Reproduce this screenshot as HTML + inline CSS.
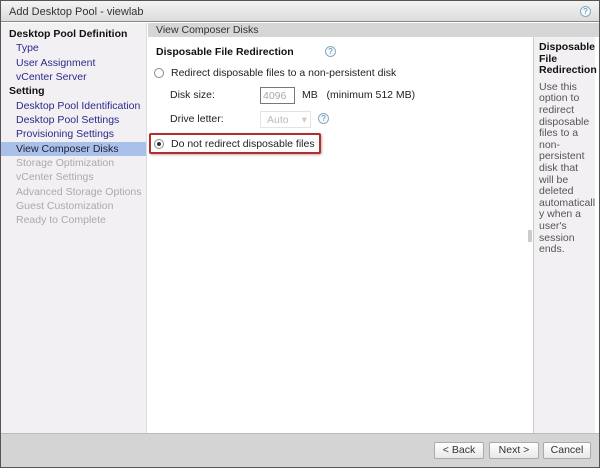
<!DOCTYPE html><html><head><style>
*{margin:0;padding:0;box-sizing:border-box}
body{width:600px;height:468px;overflow:hidden;font-family:"Liberation Sans",sans-serif;font-size:10.5px;color:#222;background:#fff;position:relative}
.frame{position:absolute;inset:0;border:1px solid #555;}
.title{position:absolute;left:1px;top:1px;right:1px;height:21px;background:linear-gradient(#f4f4f4,#dcdcdc);border-bottom:1px solid #888;padding:5px 8px;font-size:11px;color:#333}
.help{position:absolute;width:11px;height:11px;border-radius:50%;border:1px solid #8ab;font-size:8px;line-height:9px;text-align:center;color:#58a;background:#f4faff}
.side{position:absolute;left:1px;top:23px;width:146px;bottom:35px;background:#f3f0f4;border-right:1px solid #ddd}
.side div{height:14.35px;line-height:14.35px;padding-left:15px;color:#2a2a8a;white-space:nowrap}
.side .h{padding-left:8px;font-weight:bold;color:#111}
.side .sel{background:#a9c1ea;color:#223}
.side .dis{color:#aaa}
.hdr{position:absolute;left:148px;top:23px;right:1px;height:14px;background:#d6d6d6;padding:1px 8px;color:#333}
.right{position:absolute;left:533px;top:37px;width:62px;bottom:35px;background:#f3f0f4;border-left:1px solid #ccc;padding:5px 0 0 5px;font-size:10.5px;line-height:11.6px;color:#555}
.right b{color:#111;display:block;margin-bottom:5px}
.foot{position:absolute;left:1px;right:1px;top:433px;bottom:1px;background:#d4d4d4;border-top:1px solid #bbb}
.btn{position:absolute;top:442px;height:17px;border:1px solid #aaa;border-radius:2px;background:linear-gradient(#fff,#e8e8e8);text-align:center;line-height:15px;color:#333}
.radio{position:absolute;width:10px;height:10px;border-radius:50%;border:1px solid #888;background:#fff}
.t{position:absolute;white-space:nowrap}
</style></head><body>
<div class="frame"></div>
<div class="title">Add Desktop Pool - viewlab</div>
<div class="help" style="left:580px;top:6px">?</div>
<div class="side">
<div class="h" style="margin-top:4px">Desktop Pool Definition</div>
<div>Type</div><div>User Assignment</div><div>vCenter Server</div>
<div class="h">Setting</div>
<div>Desktop Pool Identification</div><div>Desktop Pool Settings</div><div>Provisioning Settings</div>
<div class="sel">View Composer Disks</div>
<div class="dis">Storage Optimization</div><div class="dis">vCenter Settings</div><div class="dis">Advanced Storage Options</div><div class="dis">Guest Customization</div><div class="dis">Ready to Complete</div>
</div>
<div class="hdr">View Composer Disks</div>
<div class="t" style="left:156px;top:46px;font-weight:bold;color:#111">Disposable File Redirection</div>
<div class="help" style="left:325px;top:46px">?</div>
<div class="radio" style="left:154px;top:68px"></div>
<div class="t" style="left:171px;top:67px">Redirect disposable files to a non-persistent disk</div>
<div class="t" style="left:170px;top:89px">Disk size:</div>
<div class="t" style="left:260px;top:87px;width:35px;height:17px;border:1px solid #777;color:#aaa;padding:2px 2px">4096</div>
<div class="t" style="left:302px;top:89px">MB &nbsp;&nbsp;(minimum 512 MB)</div>
<div class="t" style="left:170px;top:113px">Drive letter:</div>
<div class="t" style="left:260px;top:111px;width:51px;height:17px;border:1px solid #e3e3e3;color:#bbb;padding:2px 6px">Auto<span style="position:absolute;right:3px;color:#ccc">▾</span></div>
<div class="help" style="left:318px;top:113px">?</div>
<div class="t" style="left:149px;top:133px;width:172px;height:21px;border:2px solid #b03030;border-radius:2px;box-shadow:1px 1px 2px #caa"></div>
<div class="radio" style="left:154px;top:139px"></div>
<div class="t" style="left:157px;top:142px;width:4px;height:4px;border-radius:50%;background:#333"></div>
<div class="t" style="left:171px;top:138px">Do not redirect disposable files</div>
<div class="t" style="left:528px;top:230px;width:4px;height:12px;background:#ccc"></div>
<div class="right"><b>Disposable File Redirection</b>Use this option to redirect disposable files to a non-persistent disk that will be deleted automaticall y when a user's session ends.</div>
<div class="foot"></div>
<div class="btn" style="left:434px;width:50px">&lt; Back</div>
<div class="btn" style="left:489px;width:50px">Next &gt;</div>
<div class="btn" style="left:543px;width:48px">Cancel</div>
</body></html>
